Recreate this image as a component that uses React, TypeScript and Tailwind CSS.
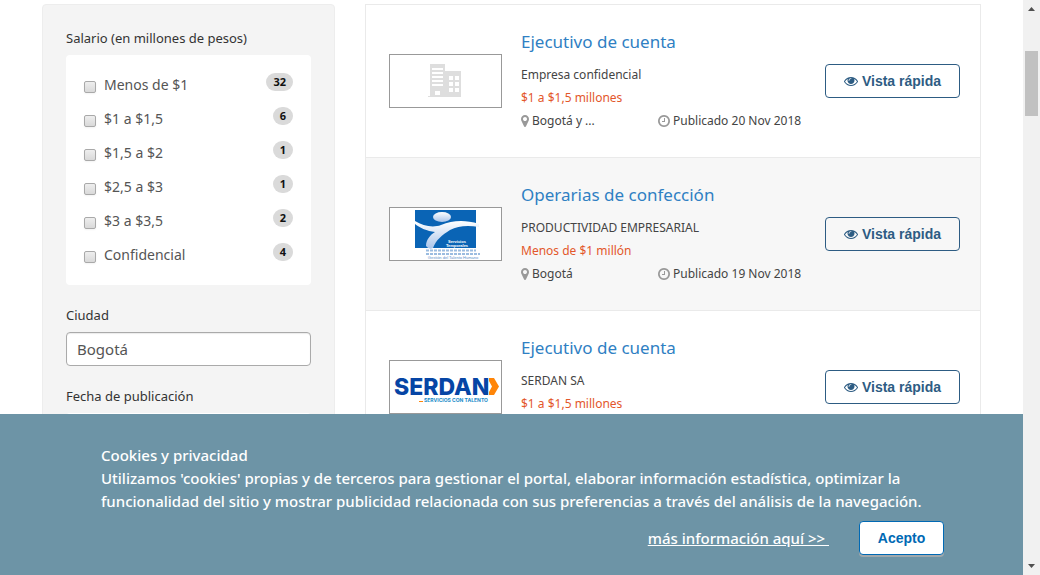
import type { ReactNode } from "react";

const salaryRanges = [
  { label: "Menos de $1", count: 32 },
  { label: "$1 a $1,5", count: 6 },
  { label: "$1,5 a $2", count: 1 },
  { label: "$2,5 a $3", count: 1 },
  { label: "$3 a $3,5", count: 2 },
  { label: "Confidencial", count: 4 },
];

function EyeIcon() {
  return (
    <svg viewBox="0 0 1792 1792" className="size-3.5" fill="currentColor" aria-hidden="true">
      <path d="M1664 960q-152-236-381-353 61 104 61 225 0 185-131.5 316.5t-316.5 131.5-316.5-131.5-131.5-316.5q0-121 61-225-229 117-381 353 133 205 333.5 326.5t434.5 121.5 434.5-121.5 333.5-326.5zm-720-384q0-20-14-34t-34-14q-125 0-214.5 89.5t-89.5 214.5q0 20 14 34t34 14 34-14 14-34q0-86 61-147t147-61q20 0 34-14t14-34zm848 384q0 34-20 69-140 230-376.5 368.5t-499.5 138.5-499.5-139-376.5-368q-20-35-20-69t20-69q140-229 376.5-368t499.5-139 499.5 139 376.5 368q20 35 20 69z" />
    </svg>
  );
}

function PinIcon() {
  return (
    <svg viewBox="384 0 1024 1792" className="h-3.5 w-2" fill="#999999" aria-hidden="true">
      <path d="M1152 640q0-106-75-181t-181-75-181 75-75 181 75 181 181 75 181-75 75-181zm256 0q0 109-33 179l-364 774q-16 33-47.5 52t-67.5 19-67.5-19-46.5-52l-365-774q-33-70-33-179 0-212 150-362t362-150 362 150 150 362z" />
    </svg>
  );
}

function ClockIcon() {
  return (
    <svg viewBox="128 0 1536 1792" className="h-3.5 w-3" fill="#999999" aria-hidden="true">
      <path d="M1024 544v448q0 14-9 23t-23 9h-320q-14 0-23-9t-9-23v-64q0-14 9-23t23-9h224v-352q0-14 9-23t23-9h64q14 0 23 9t9 23zm416 352q0-148-73-273t-198-198-273-73-273 73-198 198-73 273 73 273 198 198 273 73 273-73 198-198 73-273zm224 0q0 209-103 385.5t-279.5 279.5-385.5 103-385.5-103-279.5-279.5-103-385.5 103-385.5 279.5-279.5 385.5-103 385.5 103 279.5 279.5 103 385.5z" />
    </svg>
  );
}

function BuildingLogo() {
  return (
    <svg viewBox="0 0 111 52" className="size-full" aria-hidden="true">
      <path d="M40 9h15v33H40z M55 16h16v26H55z M38 41h33v1H38z" fill="#dedede" />
      <path d="M42 13h11v2H42z M42 17h11v2H42z M42 21h11v2H42z M42 25h11v2H42z M42 29h11v2H42z M45 36h5v4h-5z" fill="#fff" />
      <path d="M59 21h4v4h-4z M65 21h4v4h-4z M59 27h4v4h-4z M65 27h4v4h-4z M59 33h4v4h-4z M65 33h4v4h-4z" fill="#fff" />
    </svg>
  );
}

function TemporalesLogo() {
  return (
    <svg viewBox="0 0 111 52" className="size-full" aria-hidden="true">
      <defs>
        <linearGradient id="figure" x1="0" y1="0" x2="0" y2="1">
          <stop offset="0" stopColor="#ffffff" />
          <stop offset="1" stopColor="#a9c4ea" />
        </linearGradient>
      </defs>
      <path d="M25 2h61v38H25z" fill="#0a64b5" />
      <ellipse cx="52" cy="9" rx="9" ry="5" fill="url(#figure)" />
      <path d="M25 13C33 18 43 20 51 17C62 13 73 11 89 16V19C77 17 68 18 60 22C52 27 46 32 43 40Q39 42 36 38C36 32 40 27 45 24C37 23 30 20 25 16Z" fill="url(#figure)" />
      <g fontFamily="'Liberation Sans', sans-serif" textAnchor="middle">
        <text x="67" y="35" fontSize="4" fontWeight="bold" fill="#ffffff">Servicios</text>
        <text x="67" y="39" fontSize="4" fontWeight="bold" fill="#ffffff">Temporales</text>
        <text x="63" y="51" fontSize="4" fill="#5e92ca">Gestión del Talento Humano</text>
      </g>
      <path d="M36 42.500h50M36 46h54" stroke="#9bbce0" strokeWidth="2" strokeDasharray="3 1" />
    </svg>
  );
}

function SerdanLogo() {
  return (
    <svg viewBox="0 0 111 52" className="size-full" aria-hidden="true">
      <g fontFamily="Inter, 'Liberation Sans', sans-serif">
        <text x="4" y="34" fontSize="23" fontWeight="800" fill="#0645a5">SERDAN</text>
        <text x="34" y="41" fontSize="5" fontWeight="700" fill="#188bc9">SERVICIOS CON TALENTO</text>
      </g>
      <path d="M95 31h3v3h-3z" fill="#0645a5" />
      <path d="M29 40h4v1h-4z" fill="#ff8508" />
      <path d="M99 17h5l5 8.500-5 8.500h-5v-3l3-5.500-3-5.500z" fill="#ff8508" />
    </svg>
  );
}

interface Job {
  title: string;
  company: string;
  salary: string;
  city: string;
  date: string;
  logo: ReactNode;
}

const jobs: Job[] = [
  { title: "Ejecutivo de cuenta", company: "Empresa confidencial", salary: "$1 a $1,5 millones", city: "Bogotá y ...", date: "20 Nov 2018", logo: <BuildingLogo /> },
  { title: "Operarias de confección", company: "PRODUCTIVIDAD EMPRESARIAL", salary: "Menos de $1 millón", city: "Bogotá", date: "19 Nov 2018", logo: <TemporalesLogo /> },
  { title: "Ejecutivo de cuenta", company: "SERDAN SA", salary: "$1 a $1,5 millones", city: "Bogotá", date: "19 Nov 2018", logo: <SerdanLogo /> },
];

function JobRow({ job }: { job: Job }) {
  return (
    <li className="flex items-center border-b border-[#eaeaea] py-[25px] pr-5 pl-[23px] even:bg-[#f7f7f7]">
      <div className="h-[54px] w-[113px] shrink-0 border border-[#999999] bg-white">{job.logo}</div>
      <div className="ml-[19px] min-w-0 flex-1 text-xs leading-[23px] text-[#444444]">
        <h2 className="mb-[9px] text-[17px] leading-6">
          <a href="#" className="text-[#2f80c3]">{job.title}</a>
        </h2>
        <p>{job.company}</p>
        <p className="text-[#e3572b]">{job.salary}</p>
        <div className="flex">
          <p className="flex w-[137px] items-center gap-[3px]"><PinIcon />{job.city}</p>
          <p className="flex items-center gap-[3px] whitespace-nowrap"><ClockIcon />Publicado {job.date}</p>
        </div>
      </div>
      <button type="button" className="flex h-[34px] w-[135px] shrink-0 items-center justify-center gap-1 rounded border border-[#2d5c83] bg-transparent font-['Liberation_Sans',sans-serif] text-sm font-bold text-[#2d5c83]">
        <EyeIcon />Vista rápida
      </button>
    </li>
  );
}

function Filters() {
  return (
    <aside className="w-[293px] shrink-0 rounded border border-[#ededed] bg-[#f4f4f4] px-[23px] pt-[23px] text-[13px] text-[#333333]">
      <fieldset>
        <legend className="mb-[7px] leading-5">Salario (en millones de pesos)</legend>
        <div className="rounded bg-white px-[18px] py-[13px]">
          {salaryRanges.map((range) => (
            <label key={range.label} className="flex h-[34px] items-center text-sm text-[#555555]">
              <input type="checkbox" className="mt-1 size-3 appearance-none rounded-xs border border-[#a9a9a9] bg-linear-to-b from-[#eeeeee] to-[#d9d9d9] shadow-xs" />
              <span className="ml-2 flex-1">{range.label}</span>
              <span className="mb-1.5 rounded-full bg-[#dadada] px-[7px] text-[11px] leading-[18px] font-bold text-[#111111]">{range.count}</span>
            </label>
          ))}
        </div>
      </fieldset>
      <label htmlFor="ciudad" className="mt-5 mb-[7px] block leading-5">Ciudad</label>
      <input id="ciudad" type="text" defaultValue="Bogotá" className="h-[34px] w-full rounded border border-[#aaaaaa] bg-white px-2.5 text-[15px] text-[#555555] shadow-[inset_0_1px_1px_rgba(0,0,0,0.08)]" />
      <h3 className="mt-5 mb-[7px] leading-5">Fecha de publicación</h3>
      <div className="h-44 rounded bg-white" />
    </aside>
  );
}

function CookieBanner() {
  return (
    <section aria-label="Cookies y privacidad" className="absolute inset-x-0 bottom-0 bg-[#6d94a6] pt-[30px] pr-[79px] pb-5 pl-[101px] text-[15px] leading-[23px] font-medium text-white">
      <p>Cookies y privacidad</p>
      <p>
        Utilizamos 'cookies' propias y de terceros para gestionar el portal, elaborar información estadística, optimizar la funcionalidad del sitio y mostrar publicidad relacionada con sus preferencias a través del análisis de la navegación.
      </p>
      <div className="mt-2 flex items-center justify-end gap-[30px]">
        <a href="#" className="whitespace-pre underline">{"más información aquí >> "}</a>
        <button type="button" className="h-[34px] w-[85px] rounded border border-[#0069b4] bg-white font-['Liberation_Sans',sans-serif] text-sm font-bold text-[#0069b4] shadow-[0_2px_0_#a0a8ac]">Acepto</button>
      </div>
    </section>
  );
}

function Scrollbar() {
  return (
    <div aria-hidden="true" className="flex w-[17px] shrink-0 flex-col items-center bg-[#f1f1f1]">
      <svg viewBox="0 0 17 17" className="size-[17px]"><path d="M5 11h7L8.500 7z" fill="#505050" /></svg>
      <div className="mt-[34px] h-[65px] w-[13px] bg-[#c1c1c1]" />
      <svg viewBox="0 0 17 17" className="mt-auto size-[17px]"><path d="M5 6h7L8.500 10z" fill="#505050" /></svg>
    </div>
  );
}

export default function App() {
  return (
    <div className="flex h-screen overflow-hidden bg-white font-['Noto_Sans',sans-serif]">
      <div className="relative min-w-0 flex-1 overflow-hidden">
        <main className="flex gap-[30px] px-[42px] pt-1">
          <Filters />
          <ul className="min-w-0 flex-1 border border-b-0 border-[#eaeaea]">
            {jobs.map((job, i) => <JobRow key={i} job={job} />)}
          </ul>
        </main>
        <CookieBanner />
      </div>
      <Scrollbar />
    </div>
  );
}
